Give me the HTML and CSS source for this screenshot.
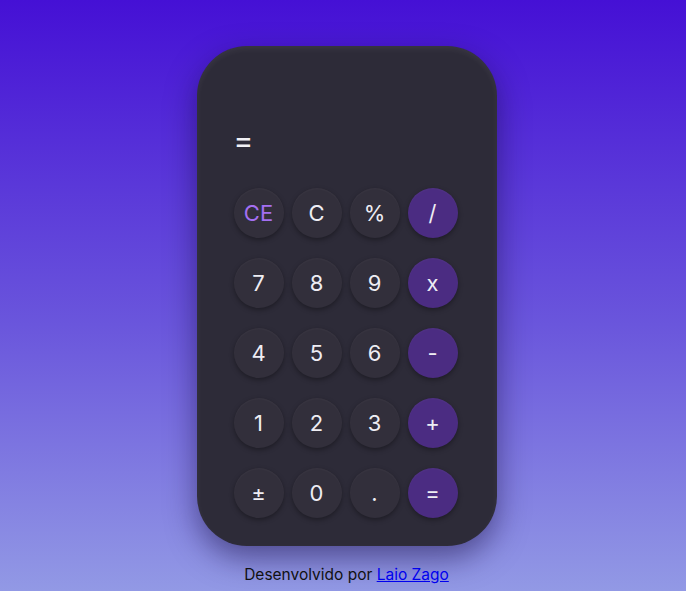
FILE: index.html
```html
<!DOCTYPE html>
<html lang="pt-BR">
<head>
<meta charset="utf-8">
<title>Calculadora</title>
<link rel="stylesheet" href="styles.css">
</head>
<body>
<main class="page">
  <section class="calc">
    <div class="display">=</div>
    <div class="keys">
      <button class="key key-ce">CE</button>
      <button class="key">C</button>
      <button class="key">%</button>
      <button class="key op">/</button>
      <button class="key">7</button>
      <button class="key">8</button>
      <button class="key">9</button>
      <button class="key op">x</button>
      <button class="key">4</button>
      <button class="key">5</button>
      <button class="key">6</button>
      <button class="key op">-</button>
      <button class="key">1</button>
      <button class="key">2</button>
      <button class="key">3</button>
      <button class="key op">+</button>
      <button class="key">±</button>
      <button class="key">0</button>
      <button class="key">.</button>
      <button class="key op">=</button>
    </div>
  </section>
  <p class="credit">Desenvolvido por <a href="#">Laio Zago</a></p>
</main>
</body>
</html>
```

FILE: styles.css
```css
html, body {
  margin: 0;
  height: 100%;
}
body {
  background: linear-gradient(180deg, #4510d5 0%, #6a56dc 55%, #9299e5 100%);
  font-family: "Inter", "Noto Sans", sans-serif;
  overflow: hidden;
}
.page {
  display: flex;
  flex-direction: column;
  align-items: center;
  padding-top: 46px;
  padding-left: 7px;
}
.calc {
  width: 300px;
  height: 500px;
  box-sizing: border-box;
  border-radius: 50px;
  background: #2d2b38;
  padding: 78px 37px 28px;
  box-shadow: 0 12px 30px rgba(20, 10, 60, 0.5), inset 0 3px 6px rgba(255, 255, 255, 0.06);
}
.display {
  height: 32px;
  line-height: 32px;
  color: #f1f0f5;
  font-size: 30px;
  padding-left: 0;
  margin-bottom: 32px;
}
.keys {
  display: grid;
  grid-template-columns: repeat(4, 50px);
  grid-auto-rows: 50px;
  column-gap: 8px;
  row-gap: 20px;
}
.key {
  width: 50px;
  height: 50px;
  border: none;
  border-radius: 50%;
  background: #322f3b;
  color: #eeedf3;
  font-family: inherit;
  font-size: 22px;
  padding: 0;
  box-shadow: 0 2px 5px rgba(0, 0, 0, 0.35), inset 0 1px 2px rgba(255, 255, 255, 0.04);
}
.key-ce {
  color: #a46ff2;
}
.op {
  background: #4b2c82;
}
.credit {
  margin: 19px 0 0;
  font-size: 15.5px;
  color: #111;
}
.credit a {
  color: #0000ee;
}
```
